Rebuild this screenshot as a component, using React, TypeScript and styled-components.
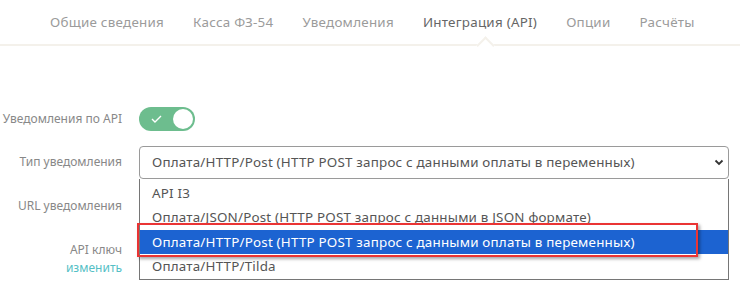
import React from 'react';
import styled, { createGlobalStyle } from 'styled-components';

const GlobalStyle = createGlobalStyle`
  body {
    margin: 0;
    background: #fff;
    font-family: 'Noto Sans', 'Open Sans', sans-serif;
  }
`;

const Page = styled.div`
  width: 740px;
  height: 291px;
  overflow: hidden;
`;

const TabBar = styled.div`
  display: flex;
  gap: 29px;
  height: 44px;
  padding-left: 50px;
  border-bottom: 2px solid #f4f1eb;
`;

const Tab = styled.div<{ active?: boolean }>`
  position: relative;
  font-size: 13.4px;
  letter-spacing: 0.25px;
  line-height: 44px;
  color: ${({ active }) => (active ? '#666' : '#9b9b9b')};
  white-space: nowrap;

  &::after {
    content: '';
    display: ${({ active }) => (active ? 'block' : 'none')};
    position: absolute;
    left: calc(50% - 1px);
    bottom: -8px;
    width: 11px;
    height: 11px;
    background: #fff;
    border-top: 2px solid #f4f1eb;
    border-left: 2px solid #f4f1eb;
    transform: rotate(45deg);
  }
`;

const Form = styled.div`
  padding-top: 54px;
  display: flex;
  flex-direction: column;
`;

const Row = styled.div<{ h: number }>`
  display: grid;
  grid-template-columns: 122px 1fr;
  column-gap: 17px;
  align-items: center;
  height: ${({ h }) => h}px;
  padding-right: 11px;
`;

const Label = styled.div`
  text-align: right;
  font-size: 12px;
  color: #888;
  line-height: 18px;
`;

const EditLink = styled.a`
  display: block;
  color: #55bfc6;
  text-decoration: none;
  font-size: 12px;
`;

const Toggle = styled.div`
  position: relative;
  width: 56px;
  height: 24px;
  border-radius: 12px;
  background: #6dbd8e;
  display: flex;
  align-items: center;
  padding-left: 12px;
  box-sizing: border-box;
`;

const Knob = styled.span`
  position: absolute;
  right: 2px;
  top: 2px;
  width: 20px;
  height: 20px;
  border-radius: 50%;
  background: #fff;
`;

const SelectWrap = styled.div`
  position: relative;
  height: 100%;
  display: flex;
  align-items: center;
`;

const SelectBox = styled.div`
  width: 100%;
  height: 33px;
  box-sizing: border-box;
  border: 1px solid #9a9a9a;
  border-radius: 4px;
  display: flex;
  align-items: center;
  justify-content: space-between;
  padding: 0 4px 0 12px;
  font-size: 13.4px;
  letter-spacing: 0.2px;
  color: #555;
`;

const Dropdown = styled.div`
  position: absolute;
  top: calc(50% + 16.5px);
  left: 0;
  right: 0;
  border: 1px solid #767676;
  border-top: none;
  background: #fff;
  padding-top: 2px;
  z-index: 2;
`;

const Option = styled.div<{ selected?: boolean }>`
  height: 24.5px;
  line-height: 24.5px;
  padding-left: 12px;
  font-size: 13.4px;
  letter-spacing: 0.2px;
  color: ${({ selected }) => (selected ? '#fff' : '#555')};
  background: ${({ selected }) => (selected ? '#1c63d1' : 'transparent')};
  white-space: nowrap;
`;

const Highlight = styled.div`
  position: absolute;
  left: -3px;
  top: 44px;
  width: 561px;
  height: 34px;
  box-sizing: border-box;
  border: 2.5px solid #ea3434;
  box-shadow: 2px 2px 3px rgba(0, 0, 0, 0.35);
  pointer-events: none;
  z-index: 3;
`;

const options = [
  'API I3',
  'Оплата/JSON/Post (HTTP POST запрос с данными в JSON формате)',
  'Оплата/HTTP/Post (HTTP POST запрос с данными оплаты в переменных)',
  'Оплата/HTTP/Tilda',
];

const tabs = ['Общие сведения', 'Касса ФЗ-54', 'Уведомления', 'Интеграция (API)', 'Опции', 'Расчёты'];

const App = () => (
  <Page>
    <GlobalStyle />
    <TabBar>
      {tabs.map((t) => (
        <Tab key={t} active={t === 'Интеграция (API)'}>
          {t}
        </Tab>
      ))}
    </TabBar>
    <Form>
      <Row h={38}>
        <Label>Уведомления по API</Label>
        <Toggle>
          <svg width="11" height="8" viewBox="0 0 11 8">
            <path d="M1 4 L4 7 L10 1" fill="none" stroke="#fff" strokeWidth="1.4" />
          </svg>
          <Knob />
        </Toggle>
      </Row>
      <Row h={48}>
        <Label>Тип уведомления</Label>
        <SelectWrap>
          <SelectBox>
            <span>{options[2]}</span>
            <svg width="10" height="7" viewBox="0 0 10 7">
              <path d="M1.5 1.5 L5 5 L8.5 1.5" fill="none" stroke="#333" strokeWidth="1.8" />
            </svg>
          </SelectBox>
          <Dropdown>
            {options.map((o, i) => (
              <Option key={o} selected={i === 2}>
                {o}
              </Option>
            ))}
            <Highlight />
          </Dropdown>
        </SelectWrap>
      </Row>
      <Row h={40}>
        <Label>URL уведомления</Label>
        <div />
      </Row>
      <Row h={66}>
        <Label>
          API ключ
          <EditLink href="#">изменить</EditLink>
        </Label>
        <div />
      </Row>
    </Form>
  </Page>
);

export default App;
